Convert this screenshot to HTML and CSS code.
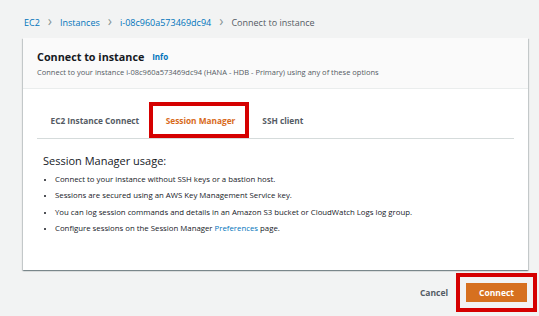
FILE: index.html
```html
<!DOCTYPE html>
<html>

<head>
    <title>Connect to instance</title>
    <link rel="stylesheet" href="styles.css">
</head>

<body>
    <div class="crumbs">
        <a class="crumbLink">EC2</a>
        <span class="chev">&#8250;</span>
        <a class="crumbLink">Instances</a>
        <span class="chev">&#8250;</span>
        <a class="crumbLink">i-08c960a573469dc94</a>
        <span class="chev">&#8250;</span>
        <span class="crumbHere">Connect to instance</span>
    </div>

    <div class="card">
        <div class="cardHead">
            <div class="title">Connect to instance <span class="info">Info</span></div>
            <div class="subtitle">Connect to your instance i-08c960a573469dc94 (HANA - HDB - Primary) using any of these options</div>
        </div>
        <div class="cardBody">
            <div class="tabs">
                <span class="tab">EC2 Instance Connect</span>
                <span class="tab tabActive">Session Manager</span>
                <span class="tab">SSH client</span>
            </div>
            <div class="usage">
                <div class="usageTitle">Session Manager usage:</div>
                <ul class="usageList">
                    <li>Connect to your instance without SSH keys or a bastion host.</li>
                    <li>Sessions are secured using an AWS Key Management Service key.</li>
                    <li>You can log session commands and details in an Amazon S3 bucket or CloudWatch Logs log group.</li>
                    <li>Configure sessions on the Session Manager <a class="link">Preferences</a> page.</li>
                </ul>
            </div>
        </div>
    </div>

    <div class="footer">
        <span class="cancel">Cancel</span>
        <span class="markBox"><span class="connectBtn">Connect</span></span>
    </div>
</body>

</html>
```

FILE: styles.css
```css
body {
    margin: 0;
    width: 539px;
    height: 316px;
    overflow: hidden;
    background: #f2f3f3;
    font-family: 'Open Sans', Arial, sans-serif;
    color: #16191f;
}

/* breadcrumb */
.crumbs {
    display: flex;
    align-items: center;
    height: 16px;
    padding: 14px 0 0 24px;
    font-size: 9px;
}

.crumbLink {
    color: #0073bb;
}

.chev {
    color: #879596;
    font-size: 14px;
    margin: -3px 8px 0 8px;
}

.crumbHere {
    color: #545b64;
}

/* card */
.card {
    margin: 8px 0 0 23px;
    width: 505px;
    background: #fff;
    box-shadow: 0 1px 1px 0 rgba(0, 28, 36, 0.3), 1px 1px 1px 0 rgba(0, 28, 36, 0.15), -1px 1px 1px 0 rgba(0, 28, 36, 0.15);
}

.cardHead {
    height: 51px;
    box-sizing: border-box;
    padding: 11px 14px 0 14px;
    background: #fafafa;
    border-bottom: 1px solid #eaeded;
}

.title {
    font-size: 10.8px;
    font-weight: 700;
    line-height: 16px;
}

.info {
    font-size: 8px;
    color: #0073bb;
    margin-left: 5px;
    vertical-align: 1px;
}

.subtitle {
    font-size: 7.5px;
    line-height: 12px;
    margin-top: 1px;
    color: #545b64;
}

.cardBody {
    height: 168px;
    padding: 13px 14px 0 14px;
}

.tabs {
    display: flex;
    height: 36px;
    border-bottom: 1px solid #d5dbdb;
}

.tab {
    display: flex;
    align-items: center;
    padding: 0 13.5px;
    font-size: 8.3px;
    font-weight: 700;
    color: #545b64;
}

.tabActive {
    color: #d86a1b;
    padding-left: 17px;
    margin-left: -4px;
    outline: 4px solid #d50000;
    outline-offset: -4px;
}

.usage {
    padding: 14px 0 0 6px;
}

.usageTitle {
    font-size: 11px;
    line-height: 16px;
}

.usageList {
    margin: 2px 0 0 0;
    padding: 0 0 0 12px;
    font-size: 7.8px;
    line-height: 16.4px;
}

.usageList li::marker {
    font-size: 7px;
}

.link {
    color: #0073bb;
}

/* bottom actions */
.footer {
    display: flex;
    justify-content: flex-end;
    align-items: center;
    width: 538px;
    margin-top: 3px;
    font-size: 8.5px;
    font-weight: 700;
}

.cancel {
    color: #545b64;
    margin-right: 8px;
}

.markBox {
    border: 4px solid #d50000;
    padding: 6px;
    margin-right: 1px;
}

.connectBtn {
    display: flex;
    align-items: center;
    justify-content: center;
    width: 61px;
    height: 19px;
    background: #d6701f;
    color: #fff;
}
```
